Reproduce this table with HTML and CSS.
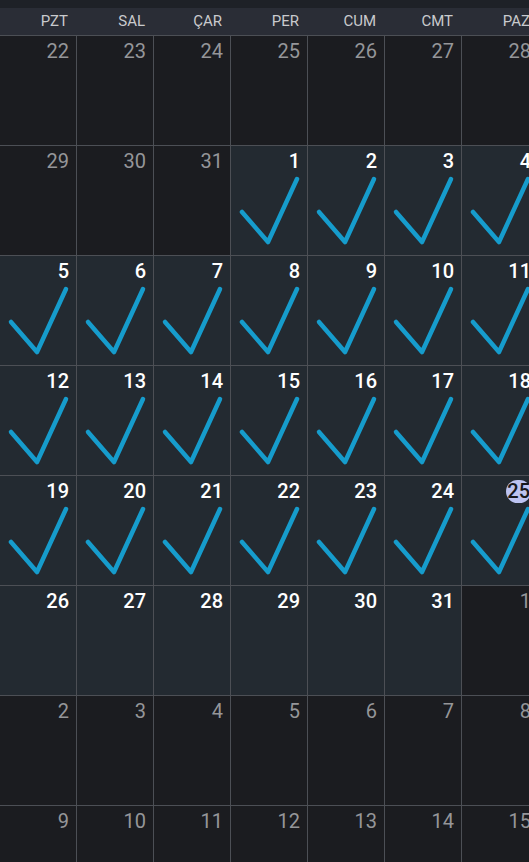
FILE: index.html
```html
<!DOCTYPE html>
<html lang="tr">

<head>
    <meta charset="UTF-8">
    <meta name="viewport" content="width=device-width, initial-scale=1.0">
    <title>Takvim</title>
    <link rel="stylesheet" href="styles.css">
</head>

<body>
    <div class="topbar"></div>
    <div class="week-head">
        <span>PZT</span>
        <span>SAL</span>
        <span>ÇAR</span>
        <span>PER</span>
        <span>CUM</span>
        <span>CMT</span>
        <span>PAZ</span>
    </div>
    <div class="month" id="month"></div>

    <script type="text/javascript">
        // günleri oluştur
        var days = [];
        var i;
        for (i = 22; i <= 31; i++) days.push({ n: i, out: true });
        for (i = 1; i <= 31; i++) days.push({ n: i, done: i <= 25, today: i == 25 });
        for (i = 1; i <= 15; i++) days.push({ n: i, out: true });

        var tick = '<svg class="tick" viewBox="0 0 76 83" width="76" height="83">' +
            '<polyline points="11,40 37,70 66,7" /></svg>';

        var html = '';
        for (i = 0; i < days.length; i++) {
            var d = days[i];
            var cls = 'day' + (d.out ? ' out' : '');
            var num = d.today ? '<span class="today">' + d.n + '</span>' : d.n;
            html += '<div class="' + cls + '"><div class="num">' + num + '</div>' +
                (d.done ? tick : '') + '</div>';
        }
        document.getElementById('month').innerHTML = html;
    </script>
</body>

</html>
```

FILE: styles.css
```css
html,
body {
    margin: 0;
    padding: 0;
    background-color: #1b1c20;
    overflow: hidden;
    font-family: Roboto, "Liberation Sans", sans-serif;
}

body {
    width: 539px;
}

.topbar {
    height: 8px;
    background-color: #1e2127;
}

.week-head {
    display: grid;
    grid-template-columns: repeat(7, 77px);
    height: 27px;
    background-color: #2a2d36;
    border-bottom: 1px solid #4c4f55;
}

.week-head span {
    text-align: right;
    padding-right: 9px;
    font-size: 15px;
    line-height: 26px;
    color: #c9cacd;
}

.month {
    display: grid;
    grid-template-columns: repeat(7, 77px);
    grid-auto-rows: 110px;
}

.day {
    box-sizing: border-box;
    background-color: #232a31;
    border-right: 1px solid #4c4f55;
    border-bottom: 1px solid #4c4f55;
}

.day.out {
    background-color: #1b1c20;
}

.num {
    height: 22px;
    padding: 4px 7px 0 0;
    text-align: right;
    font-size: 20px;
    line-height: 22px;
    font-weight: 500;
    color: #ffffff;
}

.out .num {
    font-weight: 400;
    color: #959699;
}

.today {
    display: inline-block;
    box-sizing: border-box;
    min-width: 23px;
    height: 23px;
    padding: 0 1px;
    margin-right: 0;
    border-radius: 12px;
    background-color: #bcc3f1;
    color: #16181c;
    text-align: center;
    line-height: 23px;
}

.tick {
    display: block;
}

.tick polyline {
    fill: none;
    stroke: #169ccc;
    stroke-width: 4.5;
    stroke-linecap: round;
    stroke-linejoin: round;
}
```
